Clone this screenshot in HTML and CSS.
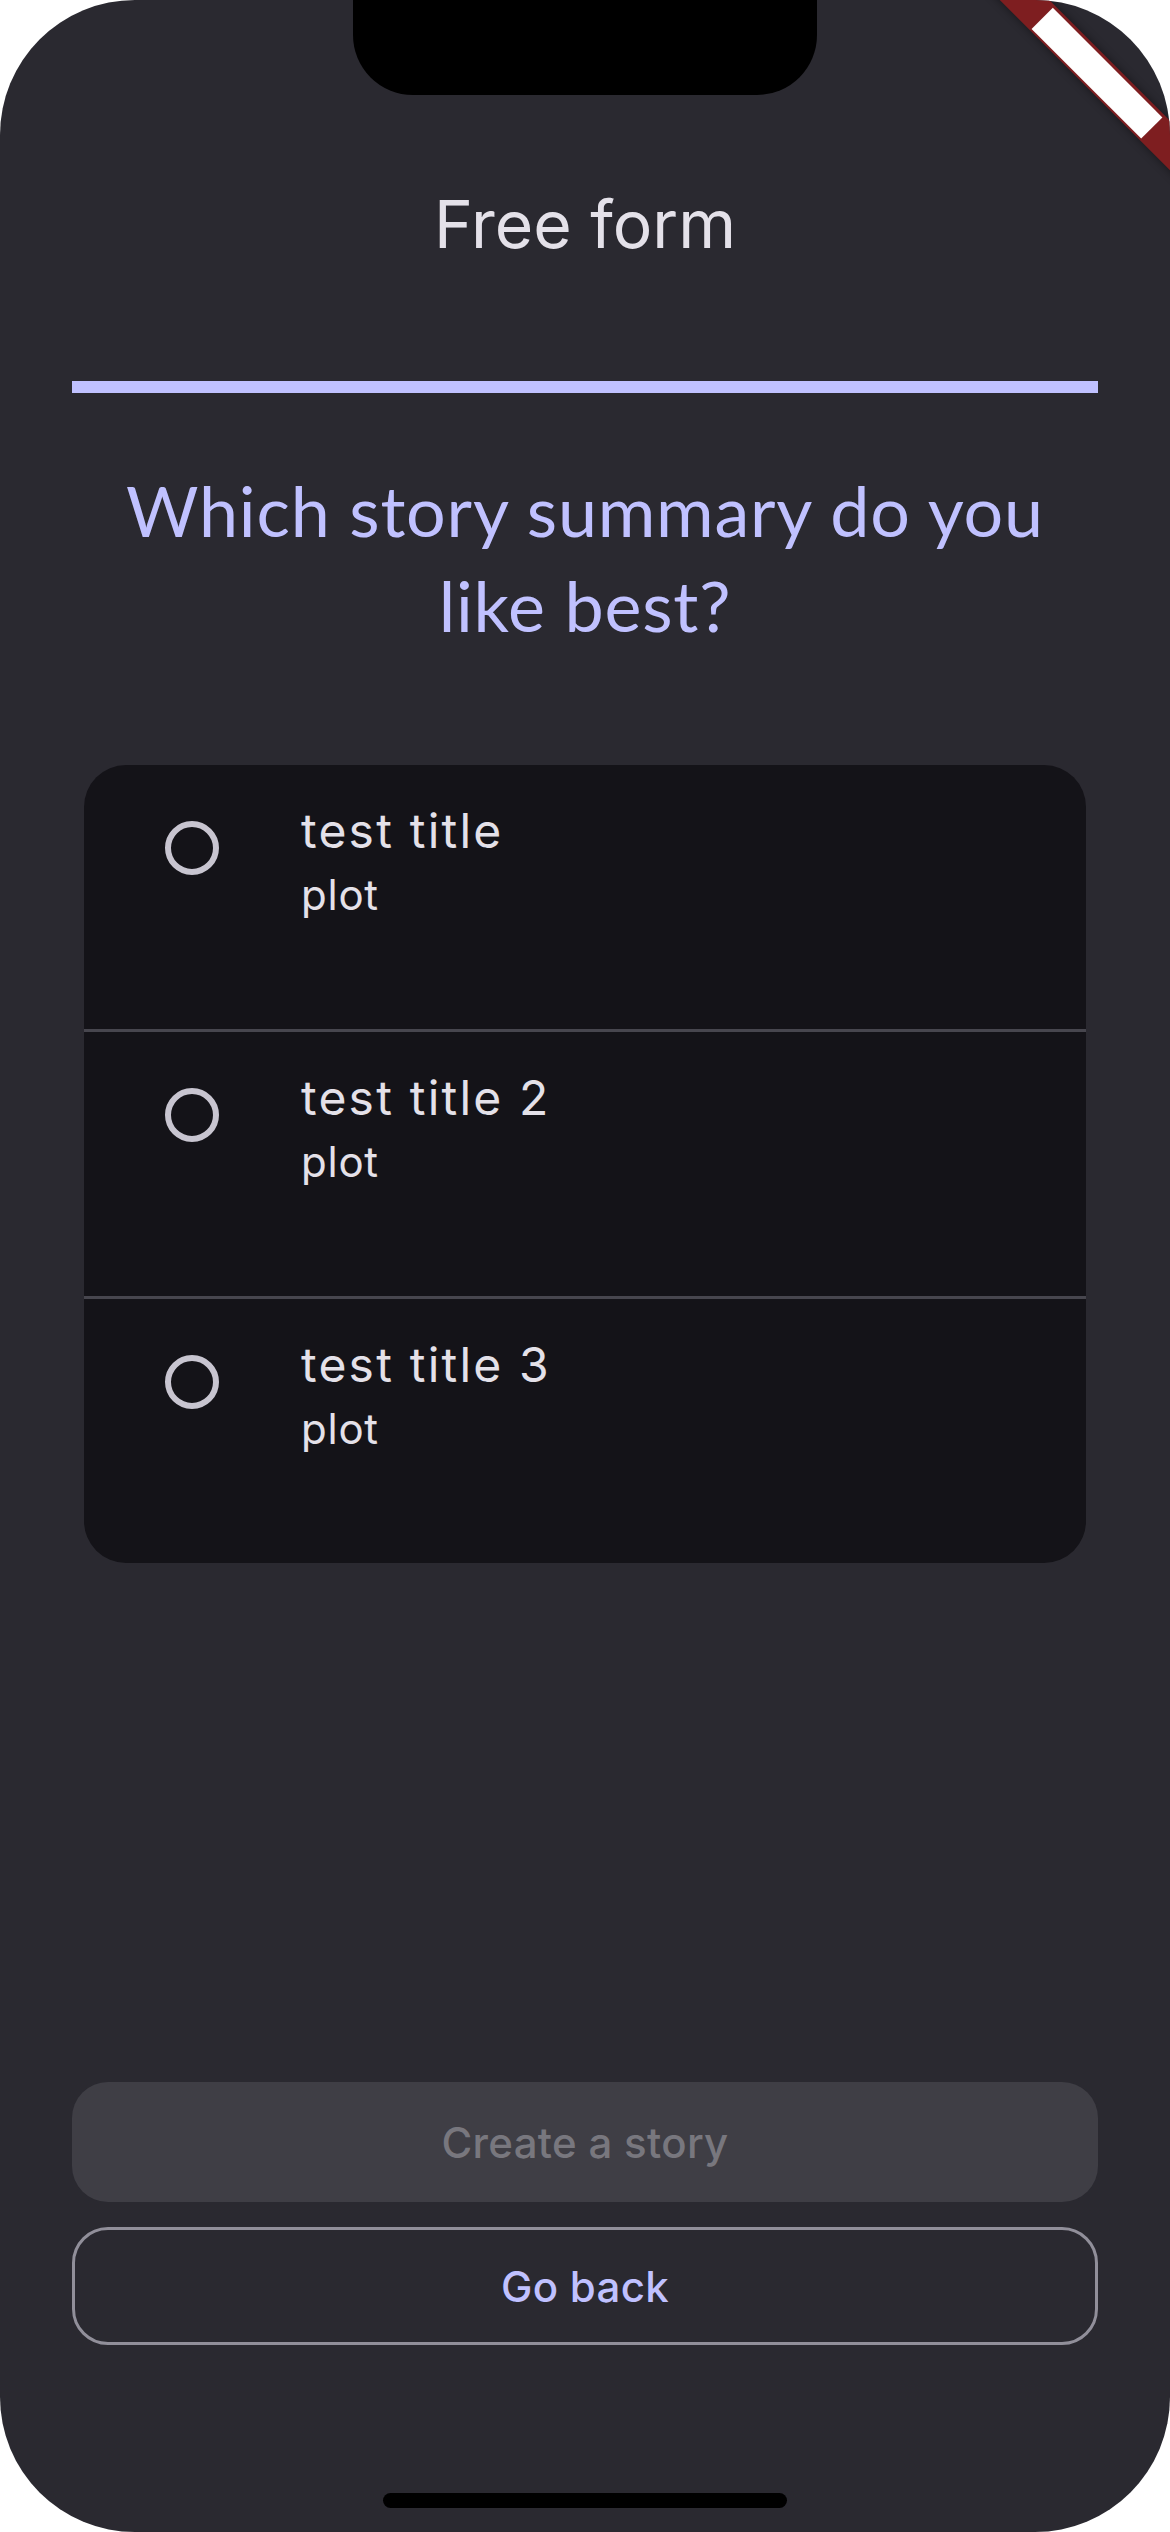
FILE: index.html
```html
<!DOCTYPE html>
<html lang="en">
<head>
<meta charset="utf-8">
<title>Free form</title>
<link rel="stylesheet" href="styles.css">
</head>
<body>
<div class="screen">
  <div class="notch"></div>
  <div class="banner"><div class="banner-label"></div></div>

  <header class="appbar"><h1 class="appbar-title">Free form</h1></header>

  <div class="progress"><div class="progress-fill" style="width:100%"></div></div>

  <h2 class="question">Which story summary do you like best?</h2>

  <ul class="options">
    <li class="option">
      <span class="radio"></span>
      <div class="option-text">
        <div class="option-title">test title</div>
        <div class="option-plot">plot</div>
      </div>
    </li>
    <li class="option">
      <span class="radio"></span>
      <div class="option-text">
        <div class="option-title">test title 2</div>
        <div class="option-plot">plot</div>
      </div>
    </li>
    <li class="option">
      <span class="radio"></span>
      <div class="option-text">
        <div class="option-title">test title 3</div>
        <div class="option-plot">plot</div>
      </div>
    </li>
  </ul>

  <div class="spacer"></div>

  <div class="actions">
    <button class="btn btn-filled" disabled>Create a story</button>
    <button class="btn btn-outline">Go back</button>
  </div>

  <div class="home-indicator"></div>
</div>
</body>
</html>
```

FILE: styles.css
```css
* { box-sizing: border-box; }

html, body {
  margin: 0;
  padding: 0;
  background: #ffffff;
}

body {
  width: 1170px;
  height: 2532px;
  overflow: hidden;
  font-family: "Inter", "Roboto", sans-serif;
}

.screen {
  position: relative;
  width: 1170px;
  height: 2532px;
  background: #2a2930;
  border-radius: 135px;
  overflow: hidden;
  display: flex;
  flex-direction: column;
}

.notch {
  position: absolute;
  top: 0;
  left: 353px;
  width: 464px;
  height: 95px;
  background: #000;
  border-radius: 0 0 60px 60px;
  z-index: 5;
}

.banner {
  position: absolute;
  left: 897px;
  top: 55px;
  width: 400px;
  height: 35px;
  background: #7e1e20;
  transform: rotate(45deg);
  box-shadow: 0 0 10px rgba(0, 0, 0, 0.45);
  display: flex;
  align-items: center;
  justify-content: center;
  z-index: 6;
}

.banner-label {
  width: 155px;
  height: 30px;
  background: #ffffff;
}

.appbar {
  padding-top: 184px;
  text-align: center;
}

.appbar-title {
  margin: 0;
  font-family: "Inter", sans-serif;
  font-weight: 400;
  font-size: 66px;
  line-height: 80px;
  color: #e4e1e9;
}

.progress {
  margin: 117px 72px 0;
  height: 12px;
  background: #46464f;
}

.progress-fill {
  height: 100%;
  background: #c0c1ff;
}

.question {
  margin: 70px 72px 0;
  font-family: "Lato", sans-serif;
  font-weight: 400;
  font-size: 70px;
  line-height: 95px;
  letter-spacing: 0.8px;
  color: #c0c1ff;
  text-align: center;
}

.options {
  list-style: none;
  margin: 112px 84px 0;
  padding: 0;
  background: #141318;
  border-radius: 42px;
  overflow: hidden;
}

.option {
  display: flex;
  align-items: flex-start;
  height: 264px;
  box-sizing: content-box;
  padding-left: 81px;
}

.option + .option {
  border-top: 3px solid #47464e;
}

.radio {
  flex: none;
  width: 54px;
  height: 54px;
  margin-top: 56px;
  border: 6.5px solid #c8c5d0;
  border-radius: 50%;
}

.option-text {
  margin-left: 82px;
  padding-top: 30px;
}

.option-title {
  font-size: 48px;
  line-height: 72px;
  letter-spacing: 2.2px;
  color: #e4e1e9;
}

.option-plot {
  font-size: 42px;
  line-height: 56px;
  letter-spacing: 0.75px;
  color: #e4e1e9;
}

.spacer {
  flex: 1;
}

.actions {
  display: flex;
  flex-direction: column;
  gap: 25px;
  padding: 0 72px 187px;
}

.btn {
  width: 100%;
  height: 120px;
  border-radius: 36px;
  font-family: "Inter", sans-serif;
  font-weight: 500;
  font-size: 42px;
  letter-spacing: 0.3px;
  cursor: pointer;
}

.btn-filled {
  background: #3f3e45;
  color: #78777e;
  border: none;
}

.btn-outline {
  height: 118px;
  background: transparent;
  color: #c0c1ff;
  border: 3px solid #918f9a;
}

.home-indicator {
  position: absolute;
  left: 383px;
  bottom: 24px;
  width: 404px;
  height: 15px;
  background: #000;
  border-radius: 8px;
}
```
